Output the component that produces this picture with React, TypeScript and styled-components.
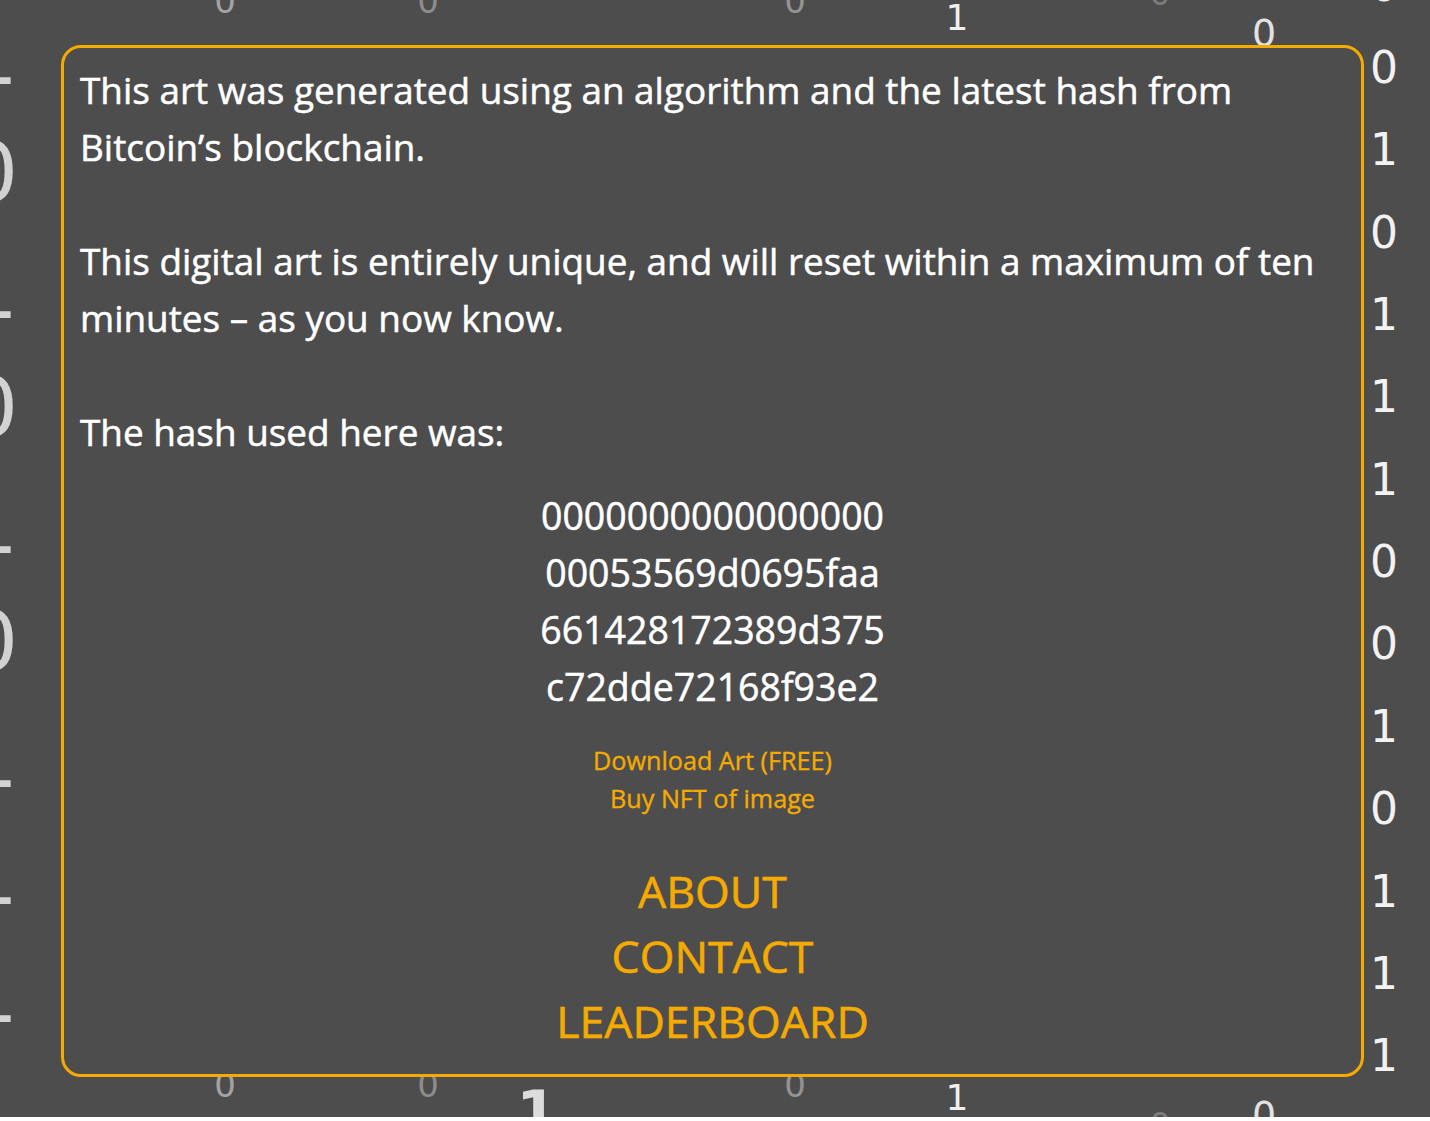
import React from 'react';
import styled, { createGlobalStyle } from 'styled-components';

const ORANGE = '#f5aa00';
const BG = '#4d4d4d';

const GlobalStyle = createGlobalStyle`
  html, body {
    margin: 0;
    padding: 0;
    background: #ffffff;
  }
  body {
    font-family: "Open Sans", "Noto Sans", sans-serif;
  }
  * { box-sizing: border-box; }
`;

const Page = styled.div`
  position: relative;
  width: 1430px;
  height: 1117px;
  background: ${BG};
  overflow: hidden;
  padding: 45px 0 0 61px;
`;

const ArtCanvas = styled.svg`
  position: absolute;
  left: 0;
  top: 0;
  width: 1430px;
  height: 1117px;
  font-family: "DejaVu Sans", sans-serif;
`;

const Panel = styled.section`
  position: relative;
  width: 1303px;
  height: 1032px;
  border: 3px solid ${ORANGE};
  border-radius: 20px;
  background: ${BG};
  padding: 14px 16px;
  display: flex;
  flex-direction: column;
  color: #ffffff;
  -webkit-text-stroke: 0.5px currentColor;
`;

const Paragraph = styled.p<{ $gap?: number }>`
  margin: 0 0 ${(p) => (p.$gap ?? 57)}px;
  font-size: 36.9px;
  line-height: 57px;
  font-weight: 400;
`;

const HashBlock = styled.div`
  display: flex;
  flex-direction: column;
  align-items: center;
  margin-bottom: 26px;
`;

const HashLine = styled.span`
  font-size: 37.5px;
  line-height: 57px;
`;

const LinkList = styled.div`
  display: flex;
  flex-direction: column;
  align-items: center;
  margin-bottom: 41px;
`;

const SmallLink = styled.a`
  color: ${ORANGE};
  font-size: 25.2px;
  line-height: 38px;
  text-decoration: none;
  -webkit-text-stroke: 0.35px currentColor;
`;

const Nav = styled.nav`
  display: flex;
  flex-direction: column;
  align-items: center;
`;

const NavLink = styled.a`
  color: ${ORANGE};
  font-size: 44.6px;
  line-height: 65px;
  text-decoration: none;
  -webkit-text-stroke: 0.6px currentColor;
`;

type Digit = { x: number; y: number; s: number; c: string; t: string; w?: number; a?: 'start' | 'middle' };

const rightCol = ['0', '0', '1', '0', '1', '1', '1', '0', '0', '1', '0', '1', '1', '1', '0'];
const leftCol = ['1', '0', '1', '0', '1', '0', '1', '1', '1'];

const digits: Digit[] = [
  // top row
  { x: 225, y: 13, s: 34, c: '#a3a3a3', t: '0' },
  { x: 428, y: 13, s: 34, c: '#8c8c8c', t: '0' },
  { x: 795, y: 13, s: 34, c: '#939393', t: '0' },
  { x: 1160, y: 5, s: 34, c: '#7c7c7c', t: '0' },
  { x: 957, y: 30, s: 36, c: '#f0f0f0', t: '1' },
  { x: 1264, y: 46, s: 38, c: '#e2e2e2', t: '0' },
  // bottom row
  { x: 225, y: 1097, s: 34, c: '#a3a3a3', t: '0' },
  { x: 428, y: 1097, s: 34, c: '#8c8c8c', t: '0' },
  { x: 795, y: 1097, s: 34, c: '#939393', t: '0' },
  { x: 537, y: 1134, s: 60, c: '#dcdcdc', t: '1', w: 700 },
  { x: 957, y: 1110, s: 36, c: '#f0f0f0', t: '1' },
  { x: 1264, y: 1128, s: 38, c: '#e2e2e2', t: '0' },
  { x: 1160, y: 1137, s: 34, c: '#7c7c7c', t: '0' },
  // right column
  ...rightCol.map((t, i) => ({
    x: 1384,
    y: 83 + (i - 1) * 82.35,
    s: 44,
    c: '#f2f2f2',
    t,
  })),
  // left column (mostly off-canvas)
  ...leftCol.map((t, k) => ({
    x: -34,
    y: 84 + k * 117.2,
    s: 82,
    c: '#d2d2d2',
    t,
    a: 'start' as const,
  })),
];

const hash = ['0000000000000000', '00053569d0695faa', '661428172389d375', 'c72dde72168f93e2'];

export default function App() {
  return (
    <>
      <GlobalStyle />
      <Page>
        <ArtCanvas viewBox="0 0 1430 1117" aria-hidden="true">
          {digits.map((d, i) => (
            <text
              key={i}
              x={d.x}
              y={d.y}
              fontSize={d.s}
              fill={d.c}
              fontWeight={d.w ?? 400}
              textAnchor={d.a ?? 'middle'}
            >
              {d.t}
            </text>
          ))}
        </ArtCanvas>
        <Panel>
          <Paragraph>
            This art was generated using an algorithm and the latest hash from Bitcoin’s blockchain.
          </Paragraph>
          <Paragraph>
            This digital art is entirely unique, and will reset within a maximum of ten minutes – as you now know.
          </Paragraph>
          <Paragraph $gap={26}>The hash used here was:</Paragraph>
          <HashBlock>
            {hash.map((h) => (
              <HashLine key={h}>{h}</HashLine>
            ))}
          </HashBlock>
          <LinkList>
            <SmallLink href="#">Download Art (FREE)</SmallLink>
            <SmallLink href="#">Buy NFT of image</SmallLink>
          </LinkList>
          <Nav>
            <NavLink href="#">ABOUT</NavLink>
            <NavLink href="#">CONTACT</NavLink>
            <NavLink href="#">LEADERBOARD</NavLink>
          </Nav>
        </Panel>
      </Page>
    </>
  );
}
